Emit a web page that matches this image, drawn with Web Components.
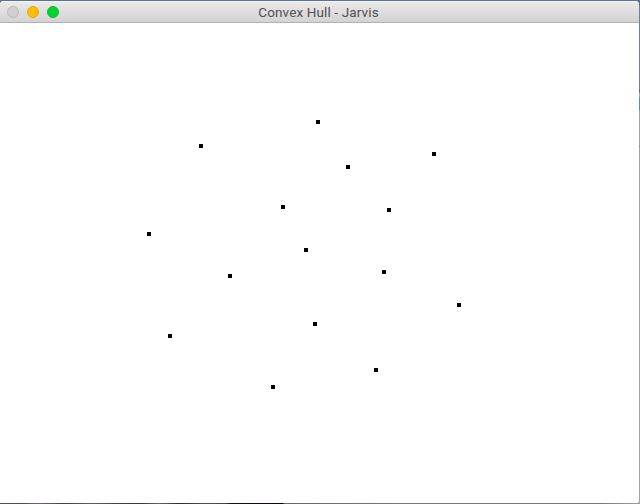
<!DOCTYPE html>
<html lang="en">
<head>
<meta charset="utf-8">
<title>Convex Hull - Jarvis</title>
<style>
html, body { margin: 0; height: 100%; overflow: hidden; }
body { font-family: Roboto, "Liberation Sans", sans-serif; }
</style>
</head>
<body>
<desktop-backdrop>
  <app-window>
    <title-bar slot="bar">Convex Hull - Jarvis</title-bar>
    <point-canvas points="316,97 199,121 346,142 432,129 387,185 147,209 281,182 228,251 304,225 382,247 457,280 313,299 168,311 374,345 271,362"></point-canvas>
  </app-window>
</desktop-backdrop>
<script>
class BaseElement extends HTMLElement {
  constructor() {
    super();
    this.attachShadow({ mode: "open" }).innerHTML = this.constructor.markup;
  }
}

customElements.define("desktop-backdrop", class extends BaseElement {
  static markup = `<style>
    :host {
      display: block; box-sizing: border-box; width: 640px; height: 504px; padding: 1px 1px 1px 0;
      background:
        linear-gradient(#5b7292, #5b7292) 0 0 / 640px 6px no-repeat,
        linear-gradient(#6d8199 0 89px, #6c5f62 90px 92px, #a2a2a2 93px 97px, #439bb0 98px 107px, #557489 108px 109px, #a2a2a2 110px 145px, #777 146px, #a2a2a2 147px 170px, #a2a2a2) 639px 0 / 1px 504px no-repeat,
        linear-gradient(90deg, #57505c 0, #4e4950 20px, #69656a 38px, #443e45 65px, #625c61 90px, #4b454b 112px, #39333d 140px, #655f66 158px, #332c35 180px, #554e51 205px, #494246 226px, #171018 230px, #080508 283px, #686868 284px, #777 400px, #777 600px, #a0a0a0) 0 498px / 640px 6px no-repeat;
    }
  </style><slot></slot>`;
});

customElements.define("app-window", class extends BaseElement {
  static markup = `<style>
    :host {
      display: flex; flex-direction: column; height: 502px; overflow: hidden;
      background: #fff; border-radius: 4px 4px 3px 1px;
    }
  </style><slot name="bar"></slot><slot></slot>`;
});

customElements.define("window-light", class extends BaseElement {
  static markup = `<style>
    :host {
      display: block; box-sizing: border-box; width: 12px; height: 12px; border-radius: 50%;
      background: var(--fill); border: 1px solid var(--edge);
    }
  </style>`;
});

customElements.define("title-bar", class extends BaseElement {
  static markup = `<style>
    :host {
      display: grid; grid-template-columns: 1fr auto 1fr; align-items: center;
      box-sizing: border-box; flex: none; height: 22px; padding: 0 9px 0 7px;
      background: linear-gradient(#eaeaea, #d3d3d3);
      border-bottom: 1px solid #b1b1b1; box-shadow: inset 0 1px #f5f5f5;
      color: #505050; font-size: 13.5px; line-height: 19px; letter-spacing: 0.13px;
      white-space: nowrap;
    }
    .lights { display: flex; gap: 8px; padding-top: 1px; }
    .title { padding-top: 2px; }
  </style>
  <div class="lights">
    <window-light style="--fill:#d0d0d0;--edge:#bababa"></window-light>
    <window-light style="--fill:#ffbf00;--edge:#e3a51b"></window-light>
    <window-light style="--fill:#00d32c;--edge:#16b62f"></window-light>
  </div>
  <span class="title"><slot></slot></span>`;
});

customElements.define("point-canvas", class extends BaseElement {
  static markup = `<style>
    :host { display: block; position: relative; flex: 1; background: #fff; }
    i { position: absolute; width: 4px; height: 4px; background: #000; }
  </style>`;
  connectedCallback() {
    for (const pair of this.getAttribute("points").split(" ")) {
      const [x, y] = pair.split(",");
      const dot = document.createElement("i");
      dot.style.left = x + "px";
      dot.style.top = y + "px";
      this.shadowRoot.append(dot);
    }
  }
});
</script>
</body>
</html>
